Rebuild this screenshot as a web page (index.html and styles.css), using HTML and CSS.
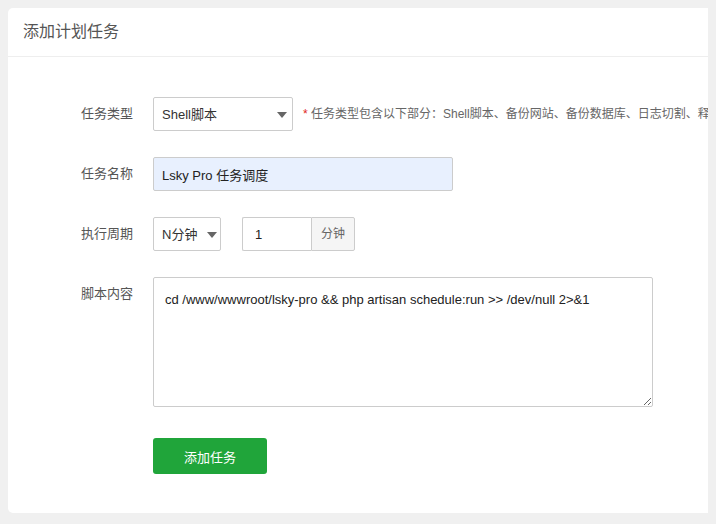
FILE: index.html
```html
<!DOCTYPE html>
<html lang="zh-CN">
<head>
  <meta charset="UTF-8">
  <title>添加计划任务</title>
  <link rel="stylesheet" href="styles.css">
</head>
<body>

  <div class="card">
    <div class="card-title">添加计划任务</div>

    <form class="task-form">
      <div class="row">
        <label class="label">任务类型</label>
        <div class="select-box type-select">
          <select>
            <option>Shell脚本</option>
            <option>备份网站</option>
            <option>备份数据库</option>
            <option>日志切割</option>
          </select>
          <span class="arrow"></span>
        </div>
        <span class="tip"><span class="star">*</span> 任务类型包含以下部分：Shell脚本、备份网站、备份数据库、日志切割、释放内存</span>
      </div>

      <div class="row">
        <label class="label">任务名称</label>
        <input class="text-input name-input" type="text" value="Lsky Pro 任务调度">
      </div>

      <div class="row">
        <label class="label">执行周期</label>
        <div class="select-box cycle-select">
          <select>
            <option>N分钟</option>
            <option>每天</option>
            <option>每小时</option>
          </select>
          <span class="arrow"></span>
        </div>
        <div class="input-group">
          <input class="text-input num-input" type="number" value="1">
          <span class="addon">分钟</span>
        </div>
      </div>

      <div class="row">
        <label class="label">脚本内容</label>
        <textarea class="script-box">cd /www/wwwroot/lsky-pro && php artisan schedule:run >> /dev/null 2>&1</textarea>
      </div>

      <div class="row actions">
        <button type="button" class="btn-green">添加任务</button>
      </div>
    </form>
  </div>

</body>
</html>
```

FILE: styles.css
```css
body {
  margin: 8px;
  background: #f0f0f0;
  font-family: "Liberation Sans", "Noto Sans CJK SC", sans-serif;
  overflow: hidden;
}

.card {
  width: 780px;
  background: #fff;
  border-radius: 5px;
}

.card-title {
  height: 48px;
  line-height: 48px;
  padding-left: 15px;
  font-size: 16px;
  color: #555;
  border-bottom: 1px solid #eee;
}

.task-form {
  padding: 40px 0 39px;
}

.row {
  display: flex;
  align-items: flex-start;
  margin-bottom: 26px;
}

.row.actions {
  margin-top: 31px;
  margin-bottom: 0;
  padding-left: 145px;
}

.label {
  width: 125px;
  margin-right: 20px;
  text-align: right;
  line-height: 34px;
  font-size: 13px;
  color: #555;
}

.select-box {
  position: relative;
  height: 34px;
}

.select-box select {
  appearance: none;
  -webkit-appearance: none;
  width: 100%;
  height: 34px;
  padding: 0 8px;
  border: 1px solid #ccc;
  border-radius: 2px;
  background: #fff;
  font-family: inherit;
  font-size: 13px;
  color: #333;
  outline: none;
}

.select-box .arrow {
  position: absolute;
  top: 15px;
  right: 6px;
  border-left: 5px solid transparent;
  border-right: 5px solid transparent;
  border-top: 6px solid #666;
  pointer-events: none;
}

.type-select {
  width: 140px;
}

.type-select .arrow {
  right: 6px;
}

.cycle-select {
  width: 68px;
}

.cycle-select .arrow {
  right: 4px;
}

.tip {
  margin-left: 10px;
  line-height: 34px;
  font-size: 12px;
  color: #666;
  white-space: nowrap;
}

.star {
  color: #e0251b;
}

.text-input {
  box-sizing: border-box;
  height: 34px;
  padding: 0 8px;
  border: 1px solid #ccc;
  border-radius: 2px;
  font-family: inherit;
  font-size: 13px;
  color: #222;
  outline: none;
}

.name-input {
  width: 300px;
  background: #e8f0fe;
}

.input-group {
  display: flex;
  margin-left: 21px;
}

.num-input {
  width: 69px;
  padding-left: 12px;
  border-right: none;
  border-radius: 2px 0 0 2px;
  -moz-appearance: textfield;
}

.num-input::-webkit-inner-spin-button,
.num-input::-webkit-outer-spin-button {
  -webkit-appearance: none;
  margin: 0;
}

.addon {
  box-sizing: border-box;
  width: 44px;
  height: 34px;
  line-height: 32px;
  text-align: center;
  border: 1px solid #ccc;
  border-radius: 0 2px 2px 0;
  background: #f5f5f5;
  font-size: 12px;
  color: #666;
}

.script-box {
  box-sizing: border-box;
  width: 500px;
  height: 130px;
  padding: 12px 11px;
  border: 1px solid #ccc;
  border-radius: 2px;
  font-family: inherit;
  font-size: 13px;
  line-height: 20px;
  color: #222;
  resize: both;
  outline: none;
}

.btn-green {
  width: 114px;
  height: 36px;
  border: none;
  border-radius: 3px;
  background: #20a53a;
  color: #fff;
  font-family: inherit;
  font-size: 13px;
  cursor: pointer;
}
```
